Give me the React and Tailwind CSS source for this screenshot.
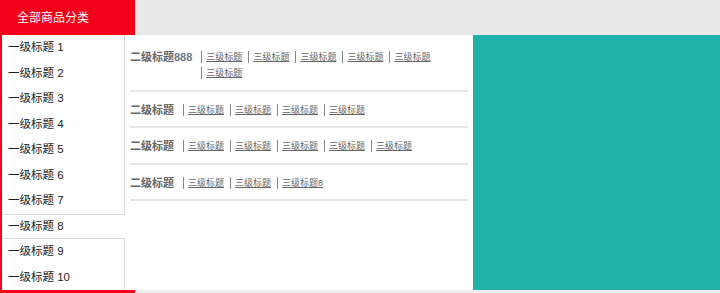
// App.jsx — category flyout menu

const FONT = "font-['Liberation_Sans','Noto_Sans_CJK_SC',sans-serif]";

const level1 = ["一级标题 1", "一级标题 2", "一级标题 3", "一级标题 4", "一级标题 5", "一级标题 6", "一级标题 7", "一级标题 8", "一级标题 9", "一级标题 10"];

const groups = [
  { title: "二级标题", extra: "888", links: ["三级标题", "三级标题", "三级标题", "三级标题", "三级标题", "三级标题"] },
  { title: "二级标题", links: ["三级标题", "三级标题", "三级标题", "三级标题"] },
  { title: "二级标题", links: ["三级标题", "三级标题", "三级标题", "三级标题", "三级标题"] },
  { title: "二级标题", links: ["三级标题", "三级标题", "三级标题8"] },
];

function Item({ label }) {
  return (
    <div className="h-[25.5px] flex items-center pl-[6px] text-[11.5px] text-[#222]">
      {label}
    </div>
  );
}

export default function App() {
  return (
    <div className={`w-[720px] h-[293px] bg-[#ececec] ${FONT} flex flex-col`}>
      {/* top bar */}
      <div className="h-[35px] flex shrink-0 bg-[#e9e9e9]">
        <div className="w-[135px] bg-[#f4001a] text-white text-[12px] flex items-center pl-[17px]">
          全部商品分类
        </div>
      </div>

      {/* body */}
      <div className="h-[255px] flex shrink-0">
        {/* level 1 list */}
        <div className="w-[125px] border-l-2 border-[#f4001a] bg-white flex flex-col shrink-0">
          <div className="border-r border-b border-[#dcdcdc]">
            {level1.slice(0, 7).map((l) => <Item key={l} label={l} />)}
          </div>
          <Item label={level1[7]} />
          <div className="border-r border-t border-[#dcdcdc] flex-1">
            {level1.slice(8).map((l) => <Item key={l} label={l} />)}
          </div>
        </div>

        {/* flyout panel */}
        <div className="w-[348px] bg-white pt-[4px] px-[5px] shrink-0">
          {groups.map((g, i) => (
            <div key={i} className="flex items-start border-b-2 border-[#e6e6e6] pt-[10px] pb-[8.5px]">
              <div className="text-[11px] leading-[16px] font-bold text-[#666] whitespace-nowrap">
                {g.title}
                {g.extra && <span className="text-[#6b7a88]">{g.extra}</span>}
              </div>
              <div className="ml-[9px] flex flex-wrap flex-1">
                {g.links.map((l, j) => (
                  <a key={j} href="#" className="my-[2px] border-l border-[#888] pl-[4px] pr-[6px] text-[9px] leading-[12px] text-[#666] underline">
                    {l}
                  </a>
                ))}
              </div>
            </div>
          ))}
        </div>

        <div className="flex-1 bg-[#20b2aa]" />
      </div>

      {/* bottom edge */}
      <div className="h-[3px] flex">
        <div className="w-[135px] bg-[#f4001a]" />
        <div className="flex-1 bg-[#efefef]" />
      </div>
    </div>
  );
}
